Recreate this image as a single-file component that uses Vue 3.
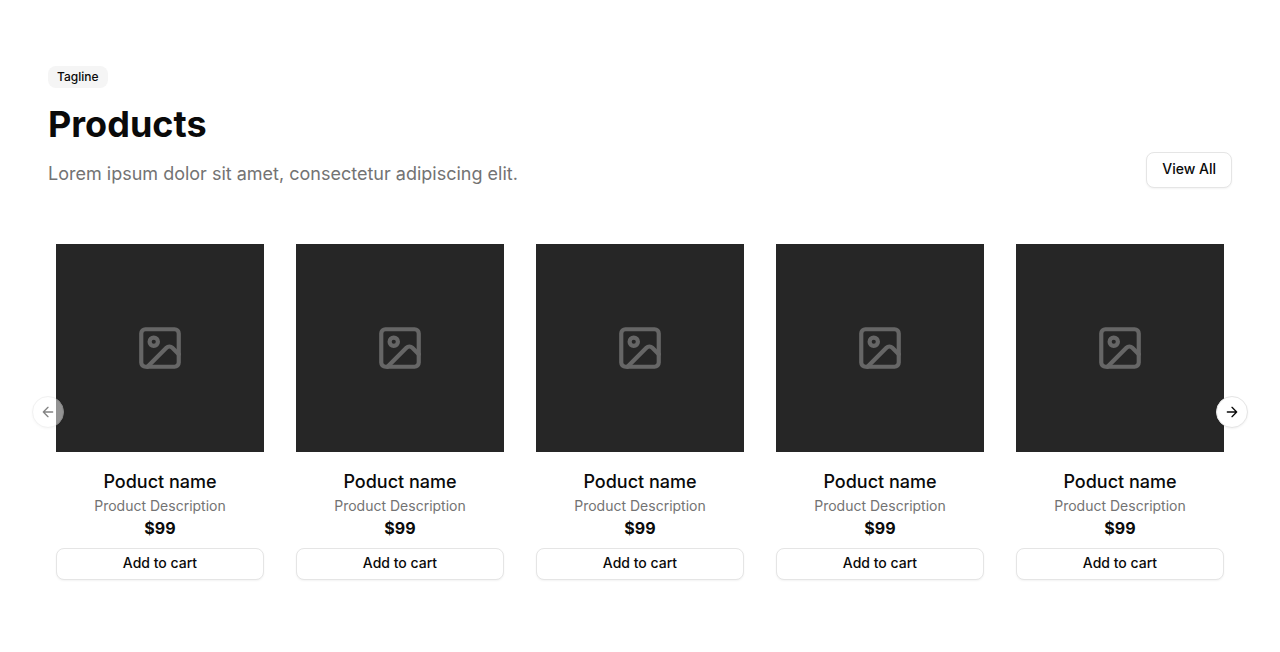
<script setup>
import { ref } from 'vue'

const atStart = ref(true)
const products = Array.from({ length: 5 }, (_, index) => ({
  id: index + 1,
  name: 'Poduct name',
  description: 'Product Description',
  price: '$99',
}))
</script>

<template>
  <main class="products">
    <header class="intro">
      <div class="copy">
        <span class="badge">Tagline</span>
        <h1>Products</h1>
        <p class="lead">Lorem ipsum dolor sit amet, consectetur adipiscing elit.</p>
      </div>
      <button type="button" class="button view-all">View All</button>
    </header>

    <section class="carousel" aria-label="Products">
      <ul class="track">
        <li v-for="product in products" :key="product.id" class="card">
          <div class="picture">
            <svg viewBox="0 0 24 24" class="placeholder" aria-hidden="true">
              <g opacity="0.3">
                <rect x="3" y="3" width="18" height="18" rx="2" />
                <circle cx="9" cy="9" r="2" />
                <path d="m21 15-3.086-3.086a2 2 0 0 0-2.828 0L6 21" />
              </g>
            </svg>
          </div>
          <h2>{{ product.name }}</h2>
          <p class="description">{{ product.description }}</p>
          <p class="price">{{ product.price }}</p>
          <button type="button" class="button cart">Add to cart</button>
        </li>
      </ul>
      <button type="button" class="arrow previous" :disabled="atStart" aria-label="Previous slide">
        <svg viewBox="0 0 24 24" aria-hidden="true"><path d="m12 19-7-7 7-7M19 12H5" /></svg>
      </button>
      <button type="button" class="arrow next" aria-label="Next slide">
        <svg viewBox="0 0 24 24" aria-hidden="true"><path d="M5 12h14M12 5l7 7-7 7" /></svg>
      </button>
    </section>
  </main>
</template>

<style>
body {
  background: #fff;
}
</style>

<style scoped>
.products {
  box-sizing: border-box;
  padding: 66px 48px 72px;
  color: #0a0a0a;
  font-family: Inter, Roboto, sans-serif;
}

h1,
h2,
p,
ul {
  margin: 0;
  padding: 0;
}

.intro {
  display: flex;
  align-items: flex-end;
  justify-content: space-between;
  gap: 24px;
  margin-bottom: 56px;
}

.copy {
  display: flex;
  flex-direction: column;
  align-items: flex-start;
}

.badge {
  padding: 3px 9px;
  border-radius: 8px;
  background: #f5f5f5;
  font-size: 12px;
  font-weight: 500;
  line-height: 16px;
}

h1 {
  margin: 16px 0;
  font-size: 36px;
  font-weight: 700;
  line-height: 40px;
}

.lead {
  color: #737373;
  font-size: 18px;
  line-height: 28px;
}

.button {
  box-sizing: border-box;
  padding: 0 15px 2px;
  border: 1px solid #e5e5e5;
  border-radius: 8px;
  background: #fff;
  box-shadow: 0 1px 2px rgb(0 0 0 / 5%);
  color: #0a0a0a;
  font: 500 14px/20px Inter, Roboto, sans-serif;
  white-space: nowrap;
}

.view-all {
  height: 36px;
}

.carousel {
  position: relative;
  padding: 0 8px;
}

.track {
  display: grid;
  grid-template-columns: repeat(5, minmax(0, 1fr));
  gap: 32px;
  list-style: none;
}

.card {
  display: flex;
  flex-direction: column;
  text-align: center;
}

.picture {
  display: grid;
  place-items: center;
  aspect-ratio: 1;
  margin-bottom: 16px;
  background: #262626;
}

.placeholder {
  width: 50px;
  height: 50px;
  fill: none;
  stroke: #fafafa;
  stroke-linecap: round;
  stroke-linejoin: round;
  stroke-width: 2;
}

h2 {
  font-size: 18px;
  font-weight: 500;
  line-height: 28px;
}

.description {
  color: #737373;
  font-size: 14px;
  line-height: 20px;
}

.price {
  font-size: 16px;
  font-weight: 700;
  line-height: 24px;
}

.cart {
  height: 32px;
  margin-top: 8px;
}

.arrow {
  position: absolute;
  top: 50%;
  display: grid;
  place-items: center;
  box-sizing: border-box;
  width: 32px;
  height: 32px;
  padding: 0;
  border: 1px solid #e5e5e5;
  border-radius: 50%;
  background: #fff;
  box-shadow: 0 1px 2px rgb(0 0 0 / 5%);
  color: #0a0a0a;
  transform: translateY(-50%);
}

.arrow:disabled {
  opacity: 0.5;
}

.arrow svg {
  width: 16px;
  height: 16px;
  fill: none;
  stroke: currentColor;
  stroke-linecap: round;
  stroke-linejoin: round;
  stroke-width: 2;
}

.previous {
  left: -16px;
}

.next {
  right: -16px;
}
</style>
